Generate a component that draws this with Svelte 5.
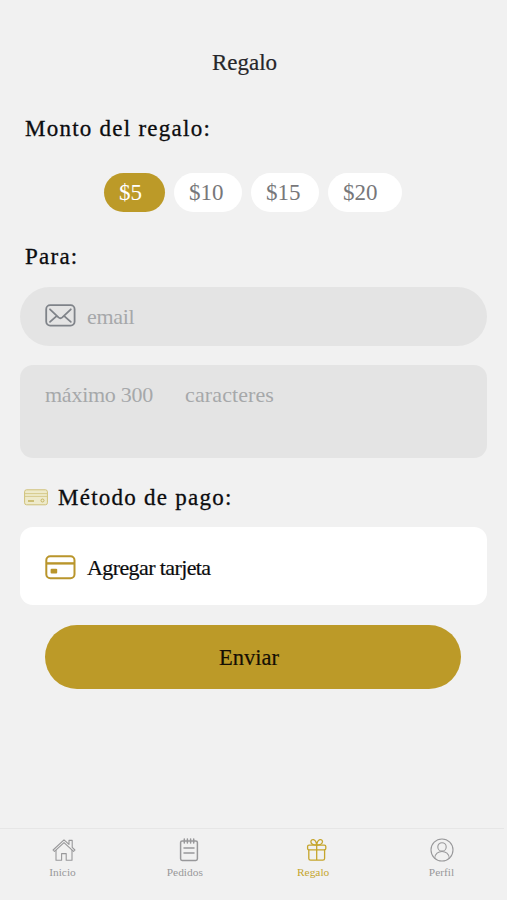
<script>
    const amounts = [5, 10, 15, 20];

    const tabs = [
        { id: 'inicio', label: 'Inicio' },
        { id: 'pedidos', label: 'Pedidos' },
        { id: 'regalo', label: 'Regalo' },
        { id: 'perfil', label: 'Perfil' },
    ];

    let amount = $state(5);
    let activeTab = $state('regalo');
</script>

<div class="screen">
    <h1>Regalo</h1>

    <h2>Monto del regalo:</h2>
    <div class="amounts">
        {#each amounts as value}
            <button class={"amount a" + value} class:selected={amount === value} onclick={() => amount = value}>${value}</button>
        {/each}
    </div>

    <h2 class="to">Para:</h2>
    <div class="field">
        <svg width="31" height="23" viewBox="0 0 31 23">
            <rect x="1.2" y="1.2" width="28.4" height="20.4" rx="4" />
            <path d="M5 5.3 13.5 13.4Q15.4 15.1 17.3 13.4L25.8 5.3M5 17.8 11.8 11.8M25.8 17.8 19 11.8" />
        </svg>
        <span>email</span>
    </div>

    <div class="note">
        <span>máximo 300</span>
        <span class="last">caracteres</span>
    </div>

    <h2 class="payment">
        <svg width="24" height="17" viewBox="0 0 24 17">
            <rect x=".6" y=".8" width="22.8" height="15" rx="2" fill="#eeeacb" stroke="#cfc178" />
            <path d="M1 4.6H23M1 7.4H23" stroke="#d6ca8c" />
            <path d="M4 12H10" stroke="#c5b45f" stroke-width="1.6" />
            <circle cx="18.5" cy="11.5" r="1.5" fill="none" stroke="#c5b45f" />
        </svg>
        Método de pago:
    </h2>
    <div class="card">
        <svg width="31" height="25" viewBox="0 0 31 25">
            <rect x="1.3" y="1.3" width="28.2" height="22" rx="4" fill="none" stroke="#b9952b" stroke-width="2" />
            <path d="M1.3 8.4H29.5" stroke="#b9952b" stroke-width="2.4" />
            <rect x="5.6" y="13.8" width="6.6" height="4.6" rx="1" fill="#b9952b" />
        </svg>
        <span>Agregar tarjeta</span>
    </div>

    <button class="send">Enviar</button>

    <nav>
        {#each tabs as tab}
            <button class={"tab " + tab.id} class:active={activeTab === tab.id} onclick={() => activeTab = tab.id}>
                <svg width="24" height="24" viewBox="0 0 24 24">
                    {#if tab.id === 'inicio'}
                        <path d="M1.1 12 12 1.8 17 6.3V2.4H20.2V9.3L22.9 12 21.5 13.4 12 4.7 2.5 13.4Z" />
                        <path d="M4 12.3V22.2H9.6V15.6H14.2V22.2H20V12.3" />
                    {:else if tab.id === 'pedidos'}
                        <rect x="3.6" y="3" width="16.8" height="19.4" rx="1.6" />
                        <path d="M7.3 1V5M10.4 1V5M13.6 1V5M16.7 1V5M7 10H17M7 15H17" />
                    {:else if tab.id === 'regalo'}
                        <rect x="2.6" y="7.2" width="18.2" height="4.6" rx="1.4" />
                        <path d="M3.8 11.8V20.4Q3.8 22.2 5.6 22.2H17.8Q19.6 22.2 19.6 20.4V11.8M11.7 7.2V22.2" />
                        <path d="M11.7 7C9.5 7 5.9 6.2 5.9 3.8 5.9.6 10.9.4 11.7 7 12.5.4 17.5.6 17.5 3.8 17.5 6.2 13.9 7 11.7 7Z" />
                    {:else}
                        <circle cx="12" cy="12" r="11" />
                        <circle cx="12" cy="8.9" r="4.2" />
                        <path d="M4.8 20.2C4.8 11.2 19.2 11.2 19.2 20.2" />
                    {/if}
                </svg>
                <span>{tab.label}</span>
            </button>
        {/each}
    </nav>
</div>

<style>
    :global(body) {
        background-color: #f1f1f1;
    }

    .screen {
        display: flex;
        flex-direction: column;
        box-sizing: border-box;
        width: 507px;
        height: 900px;
        padding: 50px 20px 0;
        overflow: hidden;
        background-color: #f1f1f1;
        font-family: "Liberation Serif", "Times New Roman", serif;
        font-size: 23px;
        line-height: 26px;
        color: #0c0c0e;
    }

    button {
        padding: 0;
        border: none;
        background: none;
        font: inherit;
        color: inherit;
    }

    svg {
        display: block;
        flex: none;
    }

    h1, h2 {
        margin: 0;
        font-size: 23px;
        font-weight: normal;
    }

    h1 {
        padding-right: 18px;
        color: #26262a;
        text-align: center;
        -webkit-text-stroke: 0.2px;
    }

    h2 {
        margin: 40px 0 0 5px;
        letter-spacing: 1.25px;
        -webkit-text-stroke: 0.3px;
    }

    .amounts {
        display: flex;
        gap: 9px;
        margin: 31px 0 0 84px;
    }

    .amount {
        box-sizing: border-box;
        width: 68px;
        height: 39px;
        padding: 1px 0 0 15px;
        border-radius: 20px;
        background-color: white;
        color: #77777a;
        text-align: left;
    }

    .a5 {
        width: 61px;
    }

    .a20 {
        width: 74px;
    }

    .selected {
        background-color: #bc9a28;
        color: white;
    }

    .to {
        margin-top: 32px;
    }

    .field {
        display: flex;
        align-items: center;
        gap: 11px;
        height: 59px;
        margin-top: 17px;
        padding-left: 25px;
        border-radius: 30px;
        background-color: #e4e4e4;
        color: #a6a8aa;
        font-size: 22px;
        letter-spacing: -0.3px;
    }

    .field svg {
        margin-top: -2px;
        fill: none;
        stroke: #7f8389;
        stroke-width: 1.8;
        stroke-linecap: round;
    }

    .note {
        box-sizing: border-box;
        display: flex;
        gap: 32px;
        height: 93px;
        margin-top: 19px;
        padding: 17px 25px;
        border-radius: 13px;
        background-color: #e4e4e4;
        color: #a6a8aa;
        font-size: 22px;
        letter-spacing: -0.25px;
    }

    .last {
        letter-spacing: 0.1px;
    }

    .payment {
        display: flex;
        align-items: center;
        gap: 10px;
        margin: 27px 0 0 4px;
    }

    .payment svg {
        margin-top: -1px;
    }

    .card {
        display: flex;
        align-items: center;
        gap: 11px;
        box-sizing: border-box;
        height: 78px;
        margin-top: 16px;
        padding: 3px 0 0 25px;
        border-radius: 13px;
        background-color: white;
        font-size: 22px;
        letter-spacing: -0.6px;
        -webkit-text-stroke: 0.2px;
    }

    .card svg {
        margin-top: -1px;
    }

    .card span {
        padding-top: 1px;
    }

    .send {
        height: 64px;
        margin: 20px 26px 0 25px;
        padding: 2px 8px 0 0;
        border-radius: 32px;
        background-color: #bc9a28;
        font-size: 22.5px;
        color: #150f04;
        -webkit-text-stroke: 0.2px;
    }

    nav {
        display: flex;
        justify-content: space-between;
        box-sizing: border-box;
        height: 72px;
        margin: auto -17px 0 -20px;
        padding: 9px 44px 0 44px;
        border-top: 1px solid #e6e6e6;
    }

    .tab {
        display: flex;
        flex-direction: column;
        align-items: center;
        gap: 3px;
        width: 37px;
        height: 46px;
        font-size: 11.4px;
        line-height: 14px;
        color: #98989a;
    }

    .tab svg {
        margin-left: 2px;
        fill: none;
        stroke: currentColor;
        stroke-width: 1.1;
        stroke-linecap: round;
        stroke-linejoin: round;
    }

    .pedidos {
        margin: 0 4px 0 -4px;
    }

    .regalo {
        margin: 0 2px 0 -2px;
    }

    .pedidos svg {
        margin-left: 9px;
        stroke-width: 1.5;
    }

    .regalo svg {
        margin-left: 8px;
        stroke-width: 1.3;
    }

    .active {
        color: #c5a52c;
    }
</style>
